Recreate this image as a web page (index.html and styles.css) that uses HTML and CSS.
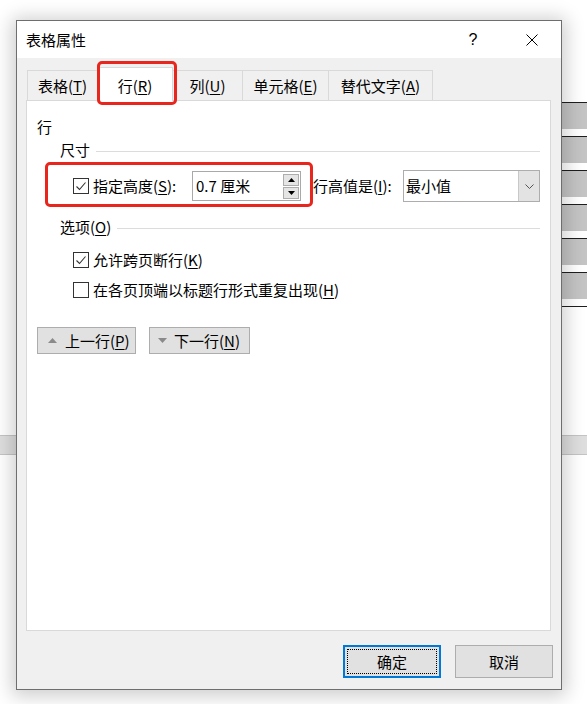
FILE: index.html
```html
<!DOCTYPE html>
<html lang="zh-CN">
<head>
<meta charset="utf-8">
<title>表格属性</title>
<link rel="stylesheet" href="styles.css">
</head>
<body>
<div class="doc">
  <div class="tbl">
    <div class="tr"><div class="td"></div></div>
    <div class="tr"><div class="td"></div></div>
    <div class="tr"><div class="td"></div></div>
    <div class="tr"><div class="td"></div></div>
    <div class="tr"><div class="td"></div></div>
    <div class="tr"><div class="td"></div></div>
    <div class="tr-end"></div>
  </div>
  <div class="bar"></div>
</div>

<div class="dialog">
  <div class="titlebar">
    <span class="title">表格属性</span>
    <span class="help">?</span>
    <span class="close"><svg width="12" height="12" viewBox="0 0 12 12"><path d="M0.5 0.5 L11.5 11.5 M11.5 0.5 L0.5 11.5" stroke="#000" stroke-width="1" fill="none"/></svg></span>
  </div>
  <div class="dbody">
    <div class="tabs">
      <div class="tab w71">表格(<u>T</u>)</div>
      <div class="tab sel">行(<u>R</u>)</div>
      <div class="tab w71">列(<u>U</u>)</div>
      <div class="tab w87">单元格(<u>E</u>)</div>
      <div class="tab w105">替代文字(<u>A</u>)</div>
    </div>
    <div class="panel">
      <div class="heading">行</div>
      <div class="grp">尺寸</div>
      <div class="sizerow">
        <div class="hl">
          <span class="cb"><svg width="14" height="14" viewBox="0 0 14 14"><path d="M2.5 7.5 L5.5 10.5 L11.5 3.5" stroke="#333" stroke-width="1.1" fill="none"/></svg></span>
          <span class="lbl1">指定高度(<u>S</u>):</span>
          <div class="spin">
            <span class="spinval">0.7 厘米</span>
            <div class="spinbtns">
              <span class="sb"><svg width="7" height="4" viewBox="0 0 7 4"><path d="M0 4 L3.5 0 L7 4 Z" fill="#000"/></svg></span>
              <span class="sb"><svg width="7" height="4" viewBox="0 0 7 4"><path d="M0 0 L3.5 4 L7 0 Z" fill="#000"/></svg></span>
            </div>
          </div>
        </div>
        <span class="lbl2">行高值是(<u>I</u>):</span>
        <div class="select">
          <span class="selval">最小值</span>
          <span class="dd"><svg width="9" height="5" viewBox="0 0 9 5"><path d="M0.5 0.5 L4.5 4.5 L8.5 0.5" stroke="#555" stroke-width="1" fill="none"/></svg></span>
        </div>
      </div>
      <div class="grp grp2">选项(<u>O</u>)</div>
      <div class="opt opt1">
        <span class="cb"><svg width="14" height="14" viewBox="0 0 14 14"><path d="M2.5 7.5 L5.5 10.5 L11.5 3.5" stroke="#333" stroke-width="1.1" fill="none"/></svg></span>
        <span>允许跨页断行(<u>K</u>)</span>
      </div>
      <div class="opt opt2">
        <span class="cb"></span>
        <span>在各页顶端以标题行形式重复出现(<u>H</u>)</span>
      </div>
      <div class="navrow">
        <div class="navbtn prev"><svg width="9" height="5" viewBox="0 0 9 5"><path d="M0 5 L4.5 0 L9 5 Z" fill="#8a8a8a"/></svg><span>上一行(<u>P</u>)</span></div>
        <div class="navbtn next"><svg width="9" height="5" viewBox="0 0 9 5"><path d="M0 0 L4.5 5 L9 0 Z" fill="#8a8a8a"/></svg><span>下一行(<u>N</u>)</span></div>
      </div>
    </div>
    <div class="footer">
      <div class="btn default">确定</div>
      <div class="btn">取消</div>
    </div>
  </div>
</div>
</body>
</html>
```
FILE: styles.css
```css
* { box-sizing: border-box; }
html, body { margin: 0; padding: 0; }
body {
  width: 587px;
  height: 704px;
  overflow: hidden;
  position: relative;
  background: #fff;
  font-family: "Noto Sans CJK SC", "Noto Sans", sans-serif;
  font-size: 15px;
  color: #000;
}
u { text-decoration: underline; text-underline-offset: 2px; text-decoration-thickness: 1px; }

/* background document */
.doc { padding-top: 102px; }
.tbl { margin-left: 440px; }
.tr { border-top: 1px solid #1e1e1e; height: 34px; }
.td { height: 26px; background: #c4c4c4; }
.tr-end { border-top: 1px solid #1e1e1e; }
.bar {
  margin-top: 128px;
  height: 20px;
  background: #dedede;
  border-top: 1px solid #c4c4c4;
  border-bottom: 1px solid #c4c4c4;
}

/* dialog */
.dialog {
  position: absolute;
  left: 16px;
  top: 20px;
  width: 546px;
  height: 670px;
  border: 1px solid #6e6e6e;
  background: #f0f0f0;
  box-shadow: 0 2px 18px 4px rgba(0, 0, 0, 0.2);
  display: flex;
  flex-direction: column;
}
.titlebar {
  height: 37px;
  background: #fff;
  display: flex;
  align-items: center;
  padding-left: 9px;
}
.title { line-height: 20px; }
.help {
  margin-left: auto;
  width: 46px;
  padding-right: 2px;
  text-align: center;
  font-family: "Liberation Sans", sans-serif;
  font-size: 16px;
  line-height: 20px;
  color: #000;
}
.close {
  width: 46px;
  margin-left: 12px;
  margin-right: 6px;
  display: flex;
  justify-content: center;
}
.close svg { display: block; }

.dbody { flex: 1; display: flex; flex-direction: column; }

.tabs {
  display: flex;
  align-items: flex-end;
  height: 34px;
  margin: 9px 0 -1px 10px;
  position: relative;
  z-index: 1;
}
.tab {
  height: 30px;
  margin-bottom: 1px;
  border: 1px solid #d9d9d9;
  border-bottom: 0;
  background: #f0f0f0;
  text-align: center;
  line-height: 29px;
  white-space: nowrap;
}
.tab + .tab { margin-left: -1px; }
.w71 { width: 71px; }
.w87 { width: 87px; }
.w105 { width: 105px; }
.tab.sel {
  width: 76px;
  height: 34px;
  margin-bottom: 0;
  padding-top: 3px;
  line-height: 29px;
  background: #fff;
  position: relative;
}
.tab.sel::after {
  content: "";
  position: absolute;
  left: -1px;
  right: -5px;
  top: -7px;
  bottom: -4px;
  border: 3px solid #e8261d;
  border-radius: 5px;
}

.panel {
  flex: 1;
  margin: 0 10px 0 9px;
  background: #fff;
  border: 1px solid #d9d9d9;
  padding: 16px 10px 0 10px;
}
.heading { line-height: 20px; }
.grp {
  display: flex;
  align-items: center;
  margin: 3px 0 0 23px;
  line-height: 20px;
}
.grp::after {
  content: "";
  flex: 1;
  height: 1px;
  background: #dcdcdc;
  margin-left: 6px;
  margin-top: 2px;
}
.grp2 { margin-top: 15px; }

.cb {
  width: 16px;
  height: 16px;
  border: 1px solid #333;
  background: #fff;
  display: flex;
  align-items: center;
  justify-content: center;
  margin-right: 4px;
  flex: none;
}
.cb svg { display: block; }

.sizerow {
  display: flex;
  align-items: center;
  height: 32px;
  margin: 10px 0 0 36px;
}
.hl {
  display: flex;
  align-items: center;
  position: relative;
  height: 30px;
}
.hl::after {
  content: "";
  position: absolute;
  left: -28px;
  right: -12px;
  top: -9px;
  bottom: -6px;
  border: 3px solid #e8261d;
  border-radius: 5px;
}
.lbl1 { width: 99px; white-space: nowrap; line-height: 20px; }
.spin {
  width: 109px;
  height: 30px;
  border: 1px solid #a9a9a9;
  background: #fff;
  display: flex;
  align-items: center;
  padding-left: 3px;
}
.spinval { flex: 1; line-height: 20px; }
.spinbtns {
  display: flex;
  flex-direction: column;
  gap: 1px;
  margin-right: 1px;
}
.sb {
  width: 16px;
  height: 12px;
  border: 1px solid #adadad;
  background: #e5e5e5;
  display: flex;
  align-items: center;
  justify-content: center;
}
.sb svg { display: block; }
.lbl2 { margin-left: 12px; width: 90px; white-space: nowrap; line-height: 20px; }
.select {
  width: 137px;
  height: 32px;
  border: 1px solid #adadad;
  background: #fff;
  display: flex;
  align-items: stretch;
}
.selval { flex: 1; padding-left: 2px; line-height: 30px; }
.dd {
  width: 21px;
  background: #e3e3e3;
  border-left: 1px solid #c8c8c8;
  display: flex;
  align-items: center;
  justify-content: center;
}
.dd svg { display: block; }

.opt {
  display: flex;
  align-items: center;
  margin-left: 36px;
  line-height: 20px;
}
.opt1 { margin-top: 13px; }
.opt2 { margin-top: 10px; }

.navrow {
  display: flex;
  gap: 13px;
  margin-top: 27px;
}
.navbtn {
  height: 27px;
  border: 1px solid #adadad;
  background: #e1e1e1;
  display: flex;
  align-items: center;
  padding-left: 10px;
  gap: 8px;
  line-height: 20px;
}
.navbtn svg { display: block; }
.prev { width: 99px; }
.next { width: 101px; padding-left: 8px; gap: 7px; }

.footer {
  display: flex;
  justify-content: flex-end;
  gap: 14px;
  padding: 14px 8px 11px 0;
}
.btn {
  width: 98px;
  height: 33px;
  background: #e1e1e1;
  border: 1px solid #adadad;
  display: flex;
  align-items: center;
  justify-content: center;
  line-height: 20px;
}
.btn.default {
  border: 2px solid #0078d7;
  outline: 1px dotted #000;
  outline-offset: -5px;
}
```
